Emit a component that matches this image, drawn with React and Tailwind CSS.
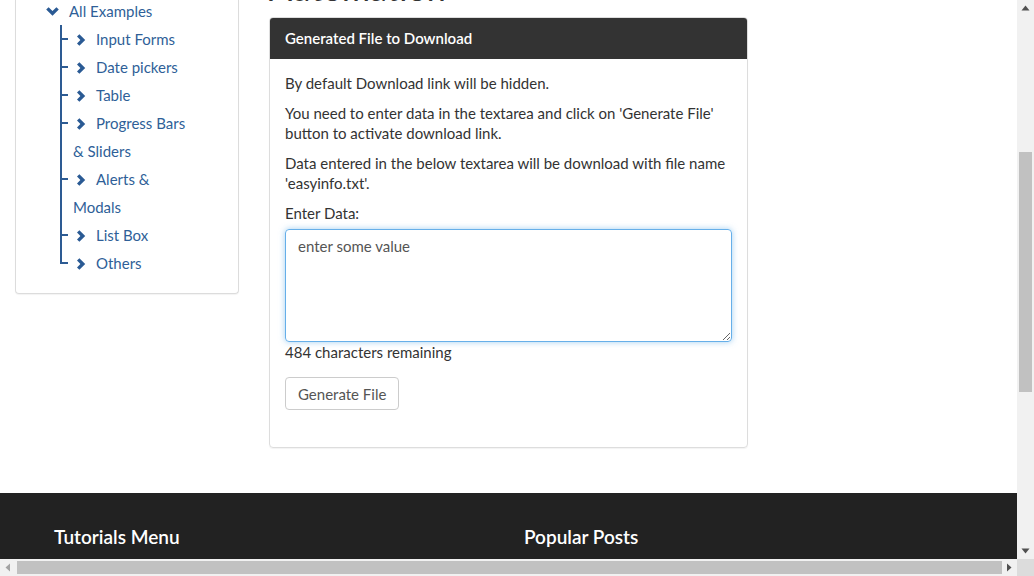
import React from "react";

const ChevronRight = () => (
  <svg width="10" height="12" viewBox="0 0 10 12" className="inline-block align-[-1px] fill-[#2a5a94]">
    <polygon points="1,2.6 3.4,0.2 9.2,6 3.4,11.8 1,9.4 4.4,6" />
  </svg>
);

const ChevronDown = () => (
  <svg width="13" height="9" viewBox="0 0 13 9" className="fill-[#2a5a94]">
    <polygon points="0.2,2.6 2.6,0.2 6.5,4.1 10.4,0.2 12.8,2.6 6.5,8.8" />
  </svg>
);

const items = [
  "Input Forms",
  "Date pickers",
  "Table",
  "Progress Bars & Sliders",
  "Alerts & Modals",
  "List Box",
  "Others",
];

const Sidebar = () => (
  <div className="ml-[15px] w-[224px] h-[294px] border-x border-b border-[#dcdcdc] rounded-b-[4px] shadow-[0_1px_1px_rgba(0,0,0,0.05)]">
    <div className="-mt-[3px] pl-[30px] text-[15px] leading-[28px] text-[#2f5f98]">
      <div className="flex items-center">
        <ChevronDown />
        <span className="ml-[10px]">All Examples</span>
      </div>
      <ul className="ml-[14px]">
        {items.map((item, i) => {
          const last = i === items.length - 1;
          return (
            <li key={item} className="relative pl-[13px]">
              {/* tree connector */}
              <span className="absolute left-0 top-0 w-[8px] h-[15px] border-l-2 border-b-2 border-[#2d5b93]" />
              {!last && (
                <span className="absolute left-0 top-[13px] bottom-0 border-l-2 border-[#2d5b93]" />
              )}
              <div className="w-[124px]">
                <span className="ml-[3px] mr-[10px]">
                  <ChevronRight />
                </span>
                {item}
              </div>
            </li>
          );
        })}
      </ul>
    </div>
  </div>
);

const Panel = () => (
  <div className="w-[479px] border border-[#dddddd] rounded-[4px] shadow-[0_1px_1px_rgba(0,0,0,0.05)] overflow-hidden">
    <div className="h-[41px] bg-[#333333] px-[15px] flex items-center text-white text-[15px] font-semibold">
      Generated File to Download
    </div>
    <div className="px-[15px] pt-[14px] pb-[37px] text-[15px] leading-[20px] text-[#333333]">
      <p className="mb-[10px]">By default Download link will be hidden.</p>
      <p className="mb-[10px]">
        You need to enter data in the textarea and click on 'Generate File'
        button to activate download link.
      </p>
      <p className="mb-[10px]">
        Data entered in the below textarea will be download with file name
        'easyinfo.txt'.
      </p>
      <p className="mb-[6px]">Enter Data:</p>
      <textarea
        defaultValue="enter some value"
        className="block w-[447px] h-[113px] px-[12px] py-[6px] border border-[#66afe9] rounded-[4px] text-[15px] leading-[20px] text-[#555555] shadow-[0_0_6px_rgba(102,175,233,0.6)] outline-none font-[Lato,sans-serif]"
      />
      <div className="text-[#333333]">484 characters remaining</div>
      <button className="mt-[15px] h-[33px] px-[12px] border border-[#cccccc] rounded-[4px] bg-white text-[#555555] text-[15px]">
        Generate File
      </button>
    </div>
  </div>
);

const ScrollV = () => (
  <div className="w-[17px] bg-[#f1f1f1] flex flex-col items-center">
    <svg width="9" height="17" viewBox="0 0 9 17" className="fill-[#505050]">
      <polygon points="0.5,10.5 4.5,5.5 8.5,10.5" />
    </svg>
    <div className="mt-[135px] w-[13px] h-[240px] bg-[#c1c1c1]" />
    <div className="flex-1" />
    <svg width="9" height="17" viewBox="0 0 9 17" className="fill-[#505050]">
      <polygon points="0.5,6.5 8.5,6.5 4.5,11.5" />
    </svg>
  </div>
);

const ScrollH = () => (
  <div className="h-[17px] flex bg-[#f1f1f1]">
    <div className="w-[17px] flex items-center justify-center">
      <svg width="17" height="9" viewBox="0 0 17 9" className="fill-[#a3a3a3]">
        <polygon points="5.5,4.5 10,0.5 10,8.5" />
      </svg>
    </div>
    <div className="w-[985px] my-[2px] bg-[#c1c1c1]" />
    <div className="w-[15px] flex items-center justify-center">
      <svg width="15" height="9" viewBox="0 0 15 9" className="fill-[#505050]">
        <polygon points="5,0.5 9.5,4.5 5,8.5" />
      </svg>
    </div>
    <div className="w-[17px] bg-[#dcdcdc]" />
  </div>
);

export default function App() {
  return (
    <div className="w-[1034px] h-[576px] overflow-hidden flex flex-col bg-white font-[Lato,sans-serif]">
      <div className="flex flex-1 min-h-0">
        <div className="w-[1017px] flex flex-col overflow-hidden">
          <div className="h-[493px] flex shrink-0">
            <Sidebar />
            <div className="ml-[30px]">
              <h1 className="-mt-[32px] mb-[9px] h-[40px] text-[34px] leading-[40px] text-[#333333]">
                Automation
              </h1>
              <Panel />
            </div>
          </div>
          <footer className="flex-1 bg-[#222222] pt-[32px] flex text-white text-[19px] font-semibold leading-[24px]">
            <div className="ml-[54px] w-[470px]">Tutorials Menu</div>
            <div>Popular Posts</div>
          </footer>
        </div>
        <ScrollV />
      </div>
      <ScrollH />
    </div>
  );
}
